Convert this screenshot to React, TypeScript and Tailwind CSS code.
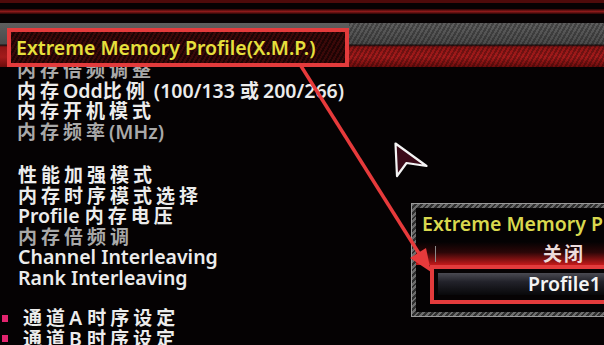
import React from 'react';

type Line = { text: string; dim?: boolean; bullet?: boolean };

const groupA: Line[] = [
  { text: '内存倍频调整', dim: true },
  { text: '内存Odd比例 (100/133 或200/266)' },
  { text: '内存开机模式' },
  { text: '内存频率(MHz)', dim: true },
];

const groupB: Line[] = [
  { text: '性能加强模式' },
  { text: '内存时序模式选择' },
  { text: 'Profile 内存电压' },
  { text: '内存倍频调', dim: true },
  { text: 'Channel Interleaving' },
  { text: 'Rank Interleaving' },
];

const groupC: Line[] = [
  { text: '通道A 时序设定', bullet: true },
  { text: '通道B 时序设定', bullet: true },
];

// CJK glyphs on this BIOS font are drawn wider than the latin ones
const mixed = (s: string) =>
  s.split(/([\u4e00-\u9fff]+)/).map((part, i) =>
    /[\u4e00-\u9fff]/.test(part) ? (
      <span key={i} className="text-[19px] leading-[20px] tracking-[4px]">
        {part}
      </span>
    ) : (
      <span key={i}>{part}</span>
    )
  );

const MenuLine = ({ line }: { line: Line }) => (
  <div className="flex h-[20.5px] items-center whitespace-nowrap leading-[20px]">
    {line.bullet && <span className="mr-[15px] ml-[-21px] h-[7px] w-[6px] bg-[#e2246e]" />}
    <span className={line.dim ? 'text-[#a9a9a9]' : 'text-[#ececec]'}>{mixed(line.text)}</span>
  </div>
);

const Overlay = () => (
  <svg className="pointer-events-none absolute inset-0 z-30" width="604" height="345" viewBox="0 0 604 345">
    <line x1="301" y1="66" x2="420" y2="255" stroke="#e63a3b" strokeWidth="3.5" />
    <polygon points="431,272 410,258 426,248" fill="#e63a3b" />
    <polygon
      points="395.5,143.5 426.5,166 406.5,163 397,176"
      fill="#3a0a18"
      stroke="#f4f4f4"
      strokeWidth="2.2"
      strokeLinejoin="round"
    />
  </svg>
);

const App: React.FC = () => {
  return (
    <div className="relative h-[345px] w-[604px] overflow-hidden bg-[#050203] font-['Noto_Sans','Noto_Sans_CJK_SC',sans-serif] text-[19.5px] leading-[20px] font-semibold">
      {/* top frame stripes */}
      <div className="h-[3px] bg-[#4f0b0b]" />
      <div className="h-[6px] bg-[#070203]" />
      <div className="h-[5px] bg-[linear-gradient(to_bottom,#2a0505,#8c1a1a,#2a0505)]" />
      <div className="h-[9px] bg-[#070203]" />

      {/* selected row */}
      <div className="relative z-10 flex h-[44px] bg-[linear-gradient(to_bottom,#5e5e5e_0,#4a4a4a_21px,#151010_22px,#8e1515_24px,#a31b1b_34px,#6a0c0c_44px)]">
        <div className="pt-[5px] pl-[7px]">
          <div className="flex h-[39px] w-[342px] items-center border-4 border-[#e33b3c] bg-[repeating-linear-gradient(120deg,#3a0909_0_2px,#1e0404_2px_4px)] pl-[5px]">
            <span className="whitespace-nowrap text-[#e6e03c]">Extreme Memory Profile(X.M.P.)</span>
          </div>
        </div>
        <div className="flex-1 bg-[repeating-linear-gradient(120deg,rgba(0,0,0,0.28)_0_2px,transparent_2px_4px)]" />
      </div>

      {/* menu */}
      <div className="mt-[-7px] pl-[17px]">
        {groupA.map((l) => (
          <MenuLine key={l.text} line={l} />
        ))}
        <div className="mt-[23px] pl-[1px]">
          {groupB.map((l) => (
            <MenuLine key={l.text} line={l} />
          ))}
        </div>
        <div className="mt-[20px] pl-[6px]">
          {groupC.map((l) => (
            <MenuLine key={l.text} line={l} />
          ))}
        </div>
      </div>

      {/* XMP option popup */}
      <div className="absolute top-[203px] left-[411px] z-20 h-[114px] w-[210px] border border-[#9a9a9a] bg-[repeating-linear-gradient(135deg,#6c6c6c_0_2px,#2e2e2e_2px_4px)] p-[4px]">
        <div className="flex h-full flex-col bg-[#040203]">
          <div className="pt-[6px] pl-[6px] whitespace-nowrap text-[#d9d84e]">Extreme Memory Profile</div>
          <div className="relative mt-[8px] flex h-[23px] items-center bg-[linear-gradient(to_bottom,transparent_0,rgba(160,20,20,0.25)_45%,#c41a1a_100%)]">
            <div className="ml-[19px] h-[16px] w-[1px] bg-[#8a8a8a]" />
            <span className="ml-[107px] text-[19px] tracking-[2px] text-[#ecdcdc]">关闭</span>
          </div>
          <div className="ml-[14px] h-[39px] border-4 border-[#e33b3c] bg-[#060304] pt-[4px] pl-[4px]">
            <div className="flex h-[22px] items-center bg-[linear-gradient(to_bottom,#4a4a52_0,#22222a_40%,#08080a_100%)] pl-[90px] text-[#f4f4f4]">
              Profile1
            </div>
          </div>
        </div>
      </div>

      <Overlay />
    </div>
  );
};

export default App;
